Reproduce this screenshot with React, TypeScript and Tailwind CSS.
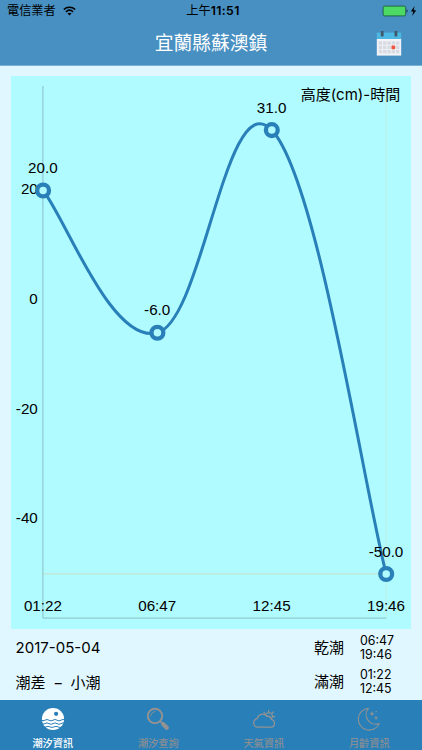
import type { ReactNode } from "react";

interface TidePoint {
  time: string;
  height: number;
  x: number;
  y: number;
}

interface Tab {
  label: string;
  active?: boolean;
  icon: ReactNode;
}

// x / y are inside the 401x553 chart area
const points: TidePoint[] = [
  { time: "01:22", height: 20, x: 32.1, y: 114.5 },
  { time: "06:47", height: -6, x: 146.4, y: 256.8 },
  { time: "12:45", height: 31, x: 260.8, y: 54.1 },
  { time: "19:46", height: -50, x: 375.2, y: 498 },
];

const yLabels = [
  { value: 20, y: 113 },
  { value: 0, y: 222.7 },
  { value: -20, y: 332.3 },
  { value: -40, y: 442 },
];

// cubic line through all points, smoothed with the neighbours
const INTENSITY = 0.2;

const linePath = points.reduce((path, cur, i) => {
  if (i === 0) return `M${cur.x} ${cur.y}`;
  const prev = points[i - 1];
  const before = points[Math.max(i - 2, 0)];
  const next = points[Math.min(i + 1, points.length - 1)];
  const x1 = prev.x + (cur.x - before.x) * INTENSITY;
  const y1 = prev.y + (cur.y - before.y) * INTENSITY;
  const x2 = cur.x - (next.x - prev.x) * INTENSITY;
  const y2 = cur.y - (next.y - prev.y) * INTENSITY;
  return `${path} C${x1} ${y1} ${x2} ${y2} ${cur.x} ${cur.y}`;
}, "");

function StatusBar() {
  return (
    <div className="relative flex h-[22px] items-center justify-between pl-[7px] pr-[5px] text-black">
      <div className="flex items-center gap-[7px]">
        <span className="text-[12.2px] leading-[22px]">電信業者</span>
        <svg width="13" height="10" viewBox="0 0 13 10" fill="none" stroke="#000" strokeWidth="1.7">
          <path d="M0.8 3.5C4 0.5 9 0.5 12.2 3.5" />
          <path d="M2.9 5.8C5 3.9 8 3.9 10.1 5.8" />
          <path d="M6.5 9.6L4.5 7.5C5.6 6.5 7.4 6.5 8.5 7.5Z" fill="#000" stroke="none" />
        </svg>
      </div>
      <span className="absolute left-0 w-full pl-1 text-center text-[12.2px] leading-[22px]">
        上午<span className="font-semibold tracking-[0.4px]">11:51</span>
      </span>
      <svg width="35" height="12" viewBox="0 0 35 12">
        <rect x="1.1" y="1.1" width="22.6" height="9.8" rx="1.6" fill="#4cd964" stroke="#174c3c" strokeWidth="0.8" />
        <path d="M24.6 4.3C25.9 4.7 25.9 7.3 24.6 7.7Z" fill="#0c2634" />
        <path d="M32.6 1L28.9 6.5H31.3L30.2 11L34.2 5.2H31.7Z" fill="#000" />
      </svg>
    </div>
  );
}

function CalendarIcon() {
  return (
    <svg width="26" height="26" viewBox="0 0 26 26">
      <path d="M0.8 1.6H25.2V9H0.8Z" fill="#4db8e2" />
      <path d="M0.8 8H25.2V24.6H0.8Z" fill="#f2f3f7" />
      <rect x="4.8" y="0" width="2.8" height="5.4" rx="0.6" fill="#40586b" />
      <rect x="18.5" y="0" width="2.8" height="5.4" rx="0.6" fill="#40586b" />
      {[10.3, 14.6, 18.9].map((y) =>
        [2.7, 7, 11.3, 15.6, 19.9].map((x) => (
          <rect key={`${x}-${y}`} x={x} y={y} width="3.5" height="3.5" fill="#d9dbe3" />
        ))
      )}
      <rect x="15.5" y="14.5" width="3.7" height="3.7" rx="0.8" fill="#f0563e" />
    </svg>
  );
}

function TideChart() {
  return (
    <svg
      className="block bg-[#b0fbff] font-['Liberation_Sans',sans-serif] text-[15.2px]"
      width="400.5"
      height="552.5"
      viewBox="0 0 400.5 552.5"
    >
      {/* limits */}
      <path d="M32 497.8H375.2" stroke="#bfe8d9" strokeWidth="1.6" />
      <path d="M375.2 10V542" stroke="#bfede3" strokeWidth="1" />
      {/* axes */}
      <path d="M31.9 10V542.1H375.2" fill="none" stroke="#87b8bf" strokeWidth="0.9" />

      {yLabels.map((l) => (
        <text key={l.value} x="26.8" y={l.y + 5.3} textAnchor="end">
          {l.value}
        </text>
      ))}
      {points.map((p) => (
        <text key={p.time} x={p.x - 0.2} y="535" textAnchor="middle">
          {p.time}
        </text>
      ))}

      <path d={linePath} fill="none" stroke="#2980b9" strokeWidth="3" />
      {points.map((p) => (
        <circle key={p.time} cx={p.x} cy={p.y} r="5.9" fill="#b0fbff" stroke="#2980b9" strokeWidth="4.3" />
      ))}
      {points.map((p) => (
        <text key={p.time} x={p.x - 0.2} y={p.y - 17.5} textAnchor="middle">
          {p.height.toFixed(1)}
        </text>
      ))}
      <text
        x="389.2"
        y="24.4"
        textAnchor="end"
        className="font-[Inter,'Noto_Sans_CJK_TC',sans-serif] text-[15px]"
      >
        高度(cm)-時間
      </text>
    </svg>
  );
}

function TideTimes({ label, times }: { label: string; times: string[] }) {
  return (
    <div className="flex items-center">
      <span className="w-[46px] text-[15px] leading-5">{label}</span>
      <span className="flex flex-col text-[12.4px] leading-[14.3px]">
        {times.map((t) => (
          <span key={t}>{t}</span>
        ))}
      </span>
    </div>
  );
}

const tabs: Tab[] = [
  {
    label: "潮汐資訊",
    active: true,
    icon: (
      <svg width="24" height="24" viewBox="0 0 24 24">
        <circle cx="12" cy="12" r="11.1" fill="#fff" />
        <circle cx="15.1" cy="6.8" r="2.1" fill="#2980b9" />
        <g fill="none" stroke="#2980b9" strokeWidth="1">
          <path d="M0 12.6Q2 14.6 4 13.2T8 13.2T12 13.2T16 13.2T20 13.2T24 13" />
          <path d="M0 16Q2 18 4 16.6T8 16.6T12 16.6T16 16.6T20 16.6T24 16.4" />
          <path d="M1 19.5Q3 21 5 19.9T9 19.9T13 19.9T17 19.9T22 19.9" />
        </g>
      </svg>
    ),
  },
  {
    label: "潮汐查詢",
    icon: (
      <svg width="24" height="24" viewBox="0 0 24 24" fill="none" stroke="#929292">
        <circle cx="9" cy="9" r="7.2" strokeWidth="2" />
        <path d="M4.6 9.3A4.7 4.7 0 0 1 9.3 4.6" strokeWidth="0.9" />
        <path d="M14.2 14.2L17 17" strokeWidth="1.8" />
        <path d="M17.3 17.3L20.8 20.8" strokeWidth="4.2" strokeLinecap="round" />
      </svg>
    ),
  },
  {
    label: "天氣資訊",
    icon: (
      <svg width="24" height="24" viewBox="0 0 24 24" fill="none" stroke="#929292" strokeWidth="1.2" strokeLinecap="round">
        <path d="M5.5 20.2H18.3A3.9 3.9 0 0 0 19.4 12.5A4.1 4.1 0 0 0 15 9.2A5.6 5.6 0 0 0 5.2 11.7A4.3 4.3 0 0 0 5.5 20.2Z" />
        <path d="M13.3 8.5A3.6 3.6 0 1 1 19.5 11.6M16.5 4.9V3.4M20 6.2L21.3 5M21 9.6H22.7M12.8 6.1L11.9 5.2M14.6 9.6Q17 8.2 18.2 10.8" />
      </svg>
    ),
  },
  {
    label: "月齡資訊",
    icon: (
      <svg width="24" height="24" viewBox="0 0 24 24" fill="none" stroke="#929292" strokeWidth="1.1" strokeLinejoin="round">
        <path d="M11.4 1.3A10.9 10.9 0 1 0 22.2 16.6A9.7 9.7 0 0 1 11.4 1.3Z" />
        <path d="M15 4.2L15.7 6L17.5 6.7L15.7 7.4L15 9.2L14.3 7.4L12.5 6.7L14.3 6Z" fill="#929292" strokeWidth="0.1" />
        <path d="M19 8.8L19.6 10.3L21 10.9L19.6 11.5L19 13L18.4 11.5L17 10.9L18.4 10.3Z" fill="#929292" strokeWidth="0.1" />
        <path d="M19.3 3.8V5.2M18.6 4.5H20" strokeWidth="0.6" />
      </svg>
    ),
  },
];

function TabBar() {
  return (
    <nav className="grid h-[50px] grid-cols-4 bg-[#2980b9]">
      {tabs.map((tab) => (
        <button
          key={tab.label}
          type="button"
          className={`flex flex-col items-center pt-[7px] text-[10.2px] leading-3 ${
            tab.active ? "text-white" : "text-[#8a8e93]"
          }`}
        >
          {tab.icon}
          <span className="mt-[5.5px] font-medium">{tab.label}</span>
        </button>
      ))}
    </nav>
  );
}

function App() {
  return (
    <div className="flex h-[750px] w-[422px] flex-col overflow-hidden bg-[#e0f7ff] font-[Inter,'Noto_Sans_CJK_TC',sans-serif] text-black">
      <header className="h-[66px] border-b border-[#79b1d7] bg-[#4890c2]">
        <StatusBar />
        <div className="grid h-[43px] grid-cols-[1fr_auto_1fr] items-center">
          <h1 className="col-start-2 text-[18.8px] leading-6 text-white">宜蘭縣蘇澳鎮</h1>
          <button type="button" className="mr-5 justify-self-end">
            <CalendarIcon />
          </button>
        </div>
      </header>

      <main className="flex grow flex-col pl-[10.6px] pt-[10px]">
        <TideChart />
        <div className="mt-[5px] flex justify-between pl-[5px] pr-[28px]">
          <div className="flex flex-col gap-[15px] pt-[4px] text-[15px] leading-5">
            <span>2017-05-04</span>
            <span>
              潮差<span className="inline-block w-[25px] text-center">−</span>小潮
            </span>
          </div>
          <div className="flex flex-col gap-[6px]">
            <TideTimes label="乾潮" times={["06:47", "19:46"]} />
            <TideTimes label="滿潮" times={["01:22", "12:45"]} />
          </div>
        </div>
      </main>

      <TabBar />
    </div>
  );
}

export default App;
